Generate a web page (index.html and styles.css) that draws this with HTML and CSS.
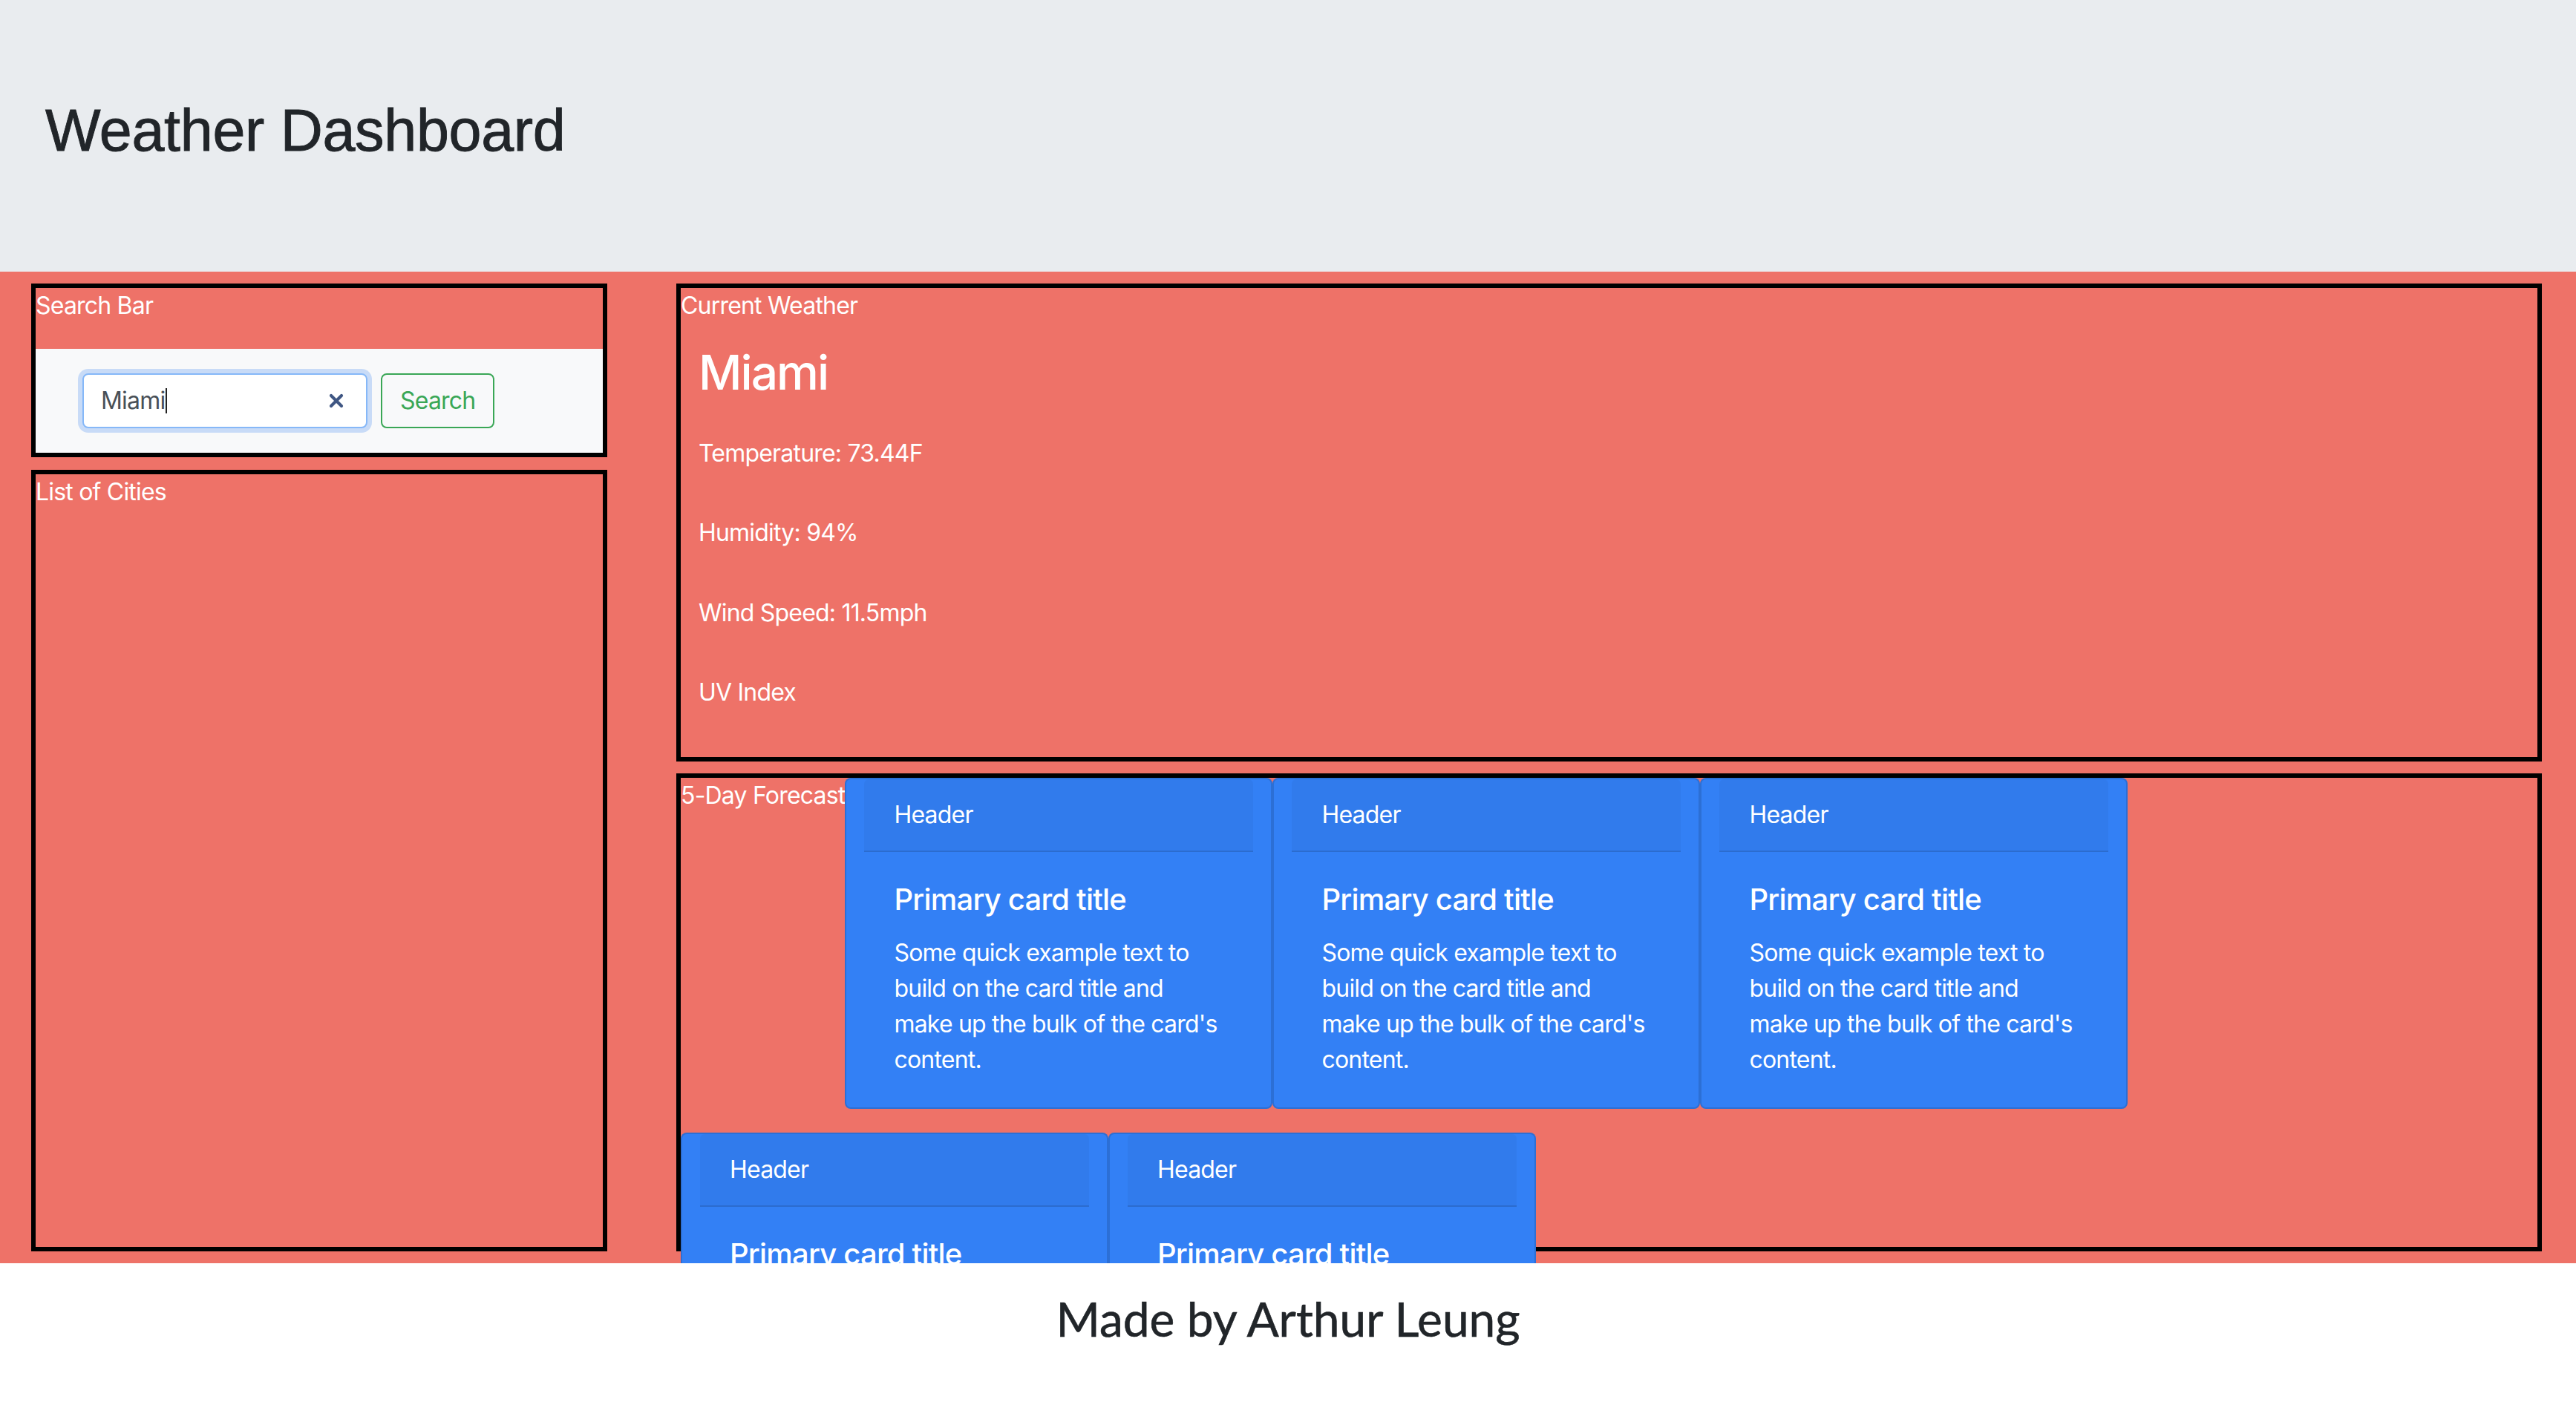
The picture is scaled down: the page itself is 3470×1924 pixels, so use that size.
FILE: index.html
```html
<!DOCTYPE html>
<html lang="en">
<head>
<meta charset="utf-8">
<title>Weather Dashboard</title>
<link rel="stylesheet" href="styles.css">
</head>
<body>
<header class="hero">
  <h1 class="hero-title">Weather Dashboard</h1>
</header>

<main class="dashboard">
  <div class="column column-left">
    <section class="panel panel-search">
      <p class="panel-label">Search Bar</p>
      <form class="search-bar">
        <div class="search-input">
          <span class="search-value">Miami</span><span class="search-caret"></span>
          <svg class="search-clear" viewBox="0 0 22 22" width="22" height="22" aria-hidden="true">
            <path d="M4 4 L18 18 M18 4 L4 18" stroke="#3f5683" stroke-width="4.2" stroke-linecap="round" fill="none"/>
          </svg>
        </div>
        <button type="button" class="search-button">Search</button>
      </form>
    </section>
    <section class="panel panel-cities">
      <p class="panel-label">List of Cities</p>
    </section>
  </div>

  <div class="column column-right">
    <section class="panel panel-current">
      <p class="panel-label">Current Weather</p>
      <div class="current-body">
        <h2 class="current-city">Miami</h2>
        <p class="current-stat">Temperature: 73.44F</p>
        <p class="current-stat">Humidity: 94%</p>
        <p class="current-stat">Wind Speed: 11.5mph</p>
        <p class="current-stat">UV Index</p>
      </div>
    </section>

    <section class="panel panel-forecast">
      <p class="panel-label">5-Day Forecast</p>
      <div class="card">
        <div class="card-header">Header</div>
        <div class="card-body">
          <h5 class="card-title">Primary card title</h5>
          <p class="card-text">Some quick example text to build on the card title and make up the bulk of the card's content.</p>
        </div>
      </div>
      <div class="card">
        <div class="card-header">Header</div>
        <div class="card-body">
          <h5 class="card-title">Primary card title</h5>
          <p class="card-text">Some quick example text to build on the card title and make up the bulk of the card's content.</p>
        </div>
      </div>
      <div class="card">
        <div class="card-header">Header</div>
        <div class="card-body">
          <h5 class="card-title">Primary card title</h5>
          <p class="card-text">Some quick example text to build on the card title and make up the bulk of the card's content.</p>
        </div>
      </div>
      <div class="card">
        <div class="card-header">Header</div>
        <div class="card-body">
          <h5 class="card-title">Primary card title</h5>
          <p class="card-text">Some quick example text to build on the card title and make up the bulk of the card's content.</p>
        </div>
      </div>
      <div class="card">
        <div class="card-header">Header</div>
        <div class="card-body">
          <h5 class="card-title">Primary card title</h5>
          <p class="card-text">Some quick example text to build on the card title and make up the bulk of the card's content.</p>
        </div>
      </div>
    </section>
  </div>
</main>

<footer class="site-footer">
  <p class="footer-text">Made by Arthur Leung</p>
</footer>
</body>
</html>
```

FILE: styles.css
```css
* {
  box-sizing: border-box;
}

html, body {
  margin: 0;
  padding: 0;
}

body {
  font-family: Inter, "Noto Sans", "Liberation Sans", sans-serif;
  font-size: 32px;
  line-height: 48px;
  letter-spacing: -0.025em;
  color: #212529;
  background: #ffffff;
}

/* ---------- Hero ---------- */
.hero {
  height: 366px;
  background: #e9ecef;
  padding: 129px 0 0 61px;
}

.hero-title {
  margin: 0;
  font-family: "Liberation Sans", Arial, sans-serif;
  font-size: 79px;
  line-height: 1.2;
  font-weight: 400;
  letter-spacing: -0.3px;
  color: #212529;
  -webkit-text-stroke: 0.9px #212529;
}

/* ---------- Main grid ---------- */
.dashboard {
  height: 1336px;
  overflow: hidden;
  background: #ee7268;
  display: grid;
  grid-template-columns: 776px 1fr;
  column-gap: 93px;
  padding: 0 46px 0 42px;
}

.column {
  display: flex;
  flex-direction: column;
  padding: 16px 0;
  min-height: 0;
}

.column-left {
  gap: 17px;
}

.column-right {
  gap: 16px;
}

.panel {
  border: 6px solid #000;
  color: #fff;
  min-height: 0;
}

.panel-label {
  margin: 0;
  font-size: 32px;
  line-height: 48px;
  color: #fff;
}

/* ---------- Search ---------- */
.panel-search {
  flex: none;
}

.panel-search .panel-label {
  margin-bottom: 34px;
}

.search-bar {
  height: 140px;
  background: #f8f9fa;
  display: flex;
  align-items: center;
  padding-left: 63px;
}

.search-input {
  width: 384px;
  height: 74px;
  border: 2px solid #86b8f8;
  border-radius: 8px;
  background: #fff;
  box-shadow: 0 0 0 6px #c8dbf7;
  display: flex;
  align-items: center;
  padding: 0 29px 0 23px;
  font-size: 32px;
  color: #495057;
}

.search-value {
  line-height: 48px;
}

.search-caret {
  width: 2px;
  height: 34px;
  background: #222;
  margin-left: 1px;
}

.search-clear {
  margin-left: auto;
  display: block;
}

.search-button {
  margin-left: 18px;
  height: 74px;
  padding: 0 24px;
  border: 2px solid #3aa756;
  border-radius: 8px;
  background: transparent;
  color: #3aa756;
  font-family: Inter, "Noto Sans", sans-serif;
  font-size: 32px;
  line-height: 48px;
  letter-spacing: -0.025em;
}

.panel-cities {
  flex: 1;
}

/* ---------- Current weather ---------- */
.panel-current {
  flex: 1;
}

.current-body {
  padding: 28px 24px 0 24px;
}

.current-city {
  margin: 0 0 46px;
  font-size: 64px;
  line-height: 76.8px;
  font-weight: 500;
  letter-spacing: -0.03em;
  color: #fff;
}

.current-stat {
  margin: 0 0 59.5px;
  font-size: 32px;
  line-height: 48px;
  color: #fff;
}

/* ---------- Forecast ---------- */
.panel-forecast {
  flex: 1;
  display: flex;
  flex-wrap: wrap;
  align-items: flex-start;
  align-content: flex-start;
}

.card {
  flex: none;
  width: 576px;
  margin-bottom: 32px;
  background: #3380f5;
  border: 2px solid rgba(0, 0, 0, 0.13);
  border-radius: 8px;
  padding: 0 24px;
  color: #fff;
}

.card-header {
  padding: 24px 40px;
  font-size: 32px;
  line-height: 48px;
  background: rgba(0, 0, 0, 0.035);
  border-bottom: 2px solid rgba(0, 0, 0, 0.125);
  border-radius: 6px 6px 0 0;
}

.card-body {
  padding: 40px;
}

.card-title {
  margin: 0 0 24px;
  font-size: 40px;
  line-height: 48px;
  font-weight: 500;
}

.card-text {
  margin: 0;
  font-size: 32px;
  line-height: 48px;
}

/* ---------- Footer ---------- */
.site-footer {
  min-height: 222px;
  background: #fff;
  padding-top: 37px;
  text-align: center;
}

.footer-text {
  margin: 0;
  font-family: Lato, "Open Sans", sans-serif;
  font-size: 64px;
  line-height: 1.2;
  letter-spacing: 0;
  color: #212529;
  -webkit-text-stroke: 0.6px #212529;
}
```
